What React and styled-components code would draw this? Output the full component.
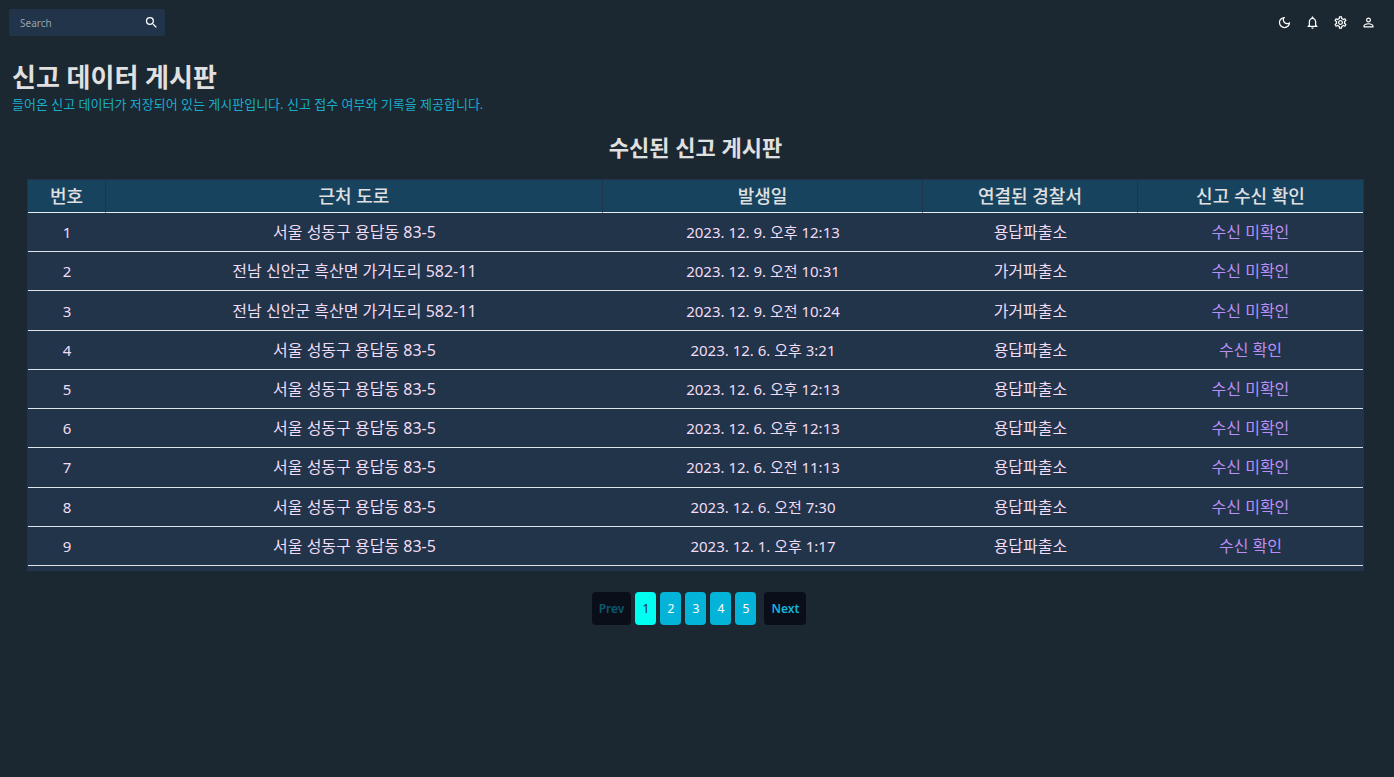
import React, { useState } from "react";
import styled, { createGlobalStyle } from "styled-components";
import {
  MdSearch,
  MdOutlineDarkMode,
  MdOutlineNotifications,
  MdOutlineSettings,
  MdPersonOutline,
} from "react-icons/md";

const GlobalStyle = createGlobalStyle`
  * { box-sizing: border-box; }
  body {
    margin: 0;
    min-height: 100vh;
    background: #1b2731;
    color: #e0e0e0;
    font-family: "Noto Sans", "Noto Sans CJK KR", sans-serif;
  }
  button, input { font-family: inherit; }
`;

const TopBar = styled.header`
  display: flex;
  justify-content: space-between;
  align-items: center;
  padding: 9px 12px 9px 9px;
`;

const SearchBox = styled.form`
  display: flex;
  align-items: center;
  width: 156px;
  height: 27px;
  padding: 0 6px 0 11px;
  background: #213449;
  border-radius: 2px;
`;

const SearchInput = styled.input`
  flex: 1;
  min-width: 0;
  padding: 0;
  border: 0;
  outline: 0;
  background: transparent;
  color: #e0e0e0;
  font-size: 10px;
  line-height: 16px;

  &::placeholder {
    color: #98a2ac;
    opacity: 1;
  }
`;

const IconButton = styled.button`
  display: flex;
  align-items: center;
  justify-content: center;
  width: ${(p) => (p.$compact ? "15px" : "28px")};
  height: 27px;
  padding: 0;
  border: 0;
  background: transparent;
  color: #ffffff;
  font-size: 15px;
  cursor: pointer;
`;

const Tools = styled.div`
  display: flex;
`;

const PageHeading = styled.div`
  padding: 14px 12px 0;
`;

const Title = styled.h1`
  margin: 0;
  font-size: 26px;
  line-height: 36px;
  font-weight: 700;
`;

const Subtitle = styled.p`
  margin: 0;
  color: #1aaccb;
  font-size: 13px;
  line-height: 18px;
`;

const Board = styled.main`
  padding: 18px 30px 0 27px;
`;

const BoardTitle = styled.h2`
  margin: 0 0 16px;
  text-align: center;
  font-size: 22px;
  line-height: 32px;
  font-weight: 700;
`;

const TablePanel = styled.div`
  padding: 1px 1px 5px;
  background: #213449;
`;

const ReportTable = styled.table`
  width: 100%;
  height: 386px;
  table-layout: fixed;
  border-collapse: separate;
  border-spacing: 0;
`;

const Column = styled.col`
  width: ${(p) => p.$width};
`;

const HeadCell = styled.th`
  height: 33px;
  padding: 0;
  background: #18435f;
  border-bottom: 1px solid #e8edf2;
  border-right: 1px solid #213449;
  font-size: 18px;
  line-height: 24px;
  font-weight: 500;

  &:last-child {
    border-right: 0;
  }
`;

const Cell = styled.td`
  height: 39px;
  padding: 0;
  border-bottom: 1px solid #e0e4ea;
  color: ${(p) => (p.$status ? "#bb8ef5" : "#f3dcf5")};
  text-align: center;
  font-size: ${(p) => (p.$numeric ? "15px" : "16px")};
  line-height: 24px;
`;

const Pagination = styled.nav`
  display: flex;
  justify-content: center;
  gap: 4px;
  padding: 21px 0 0 7px;
`;

const PageButton = styled.button`
  width: 21px;
  height: 33px;
  padding: 0;
  border: 0;
  border-radius: 4px;
  background: ${(p) => (p.$active ? "#00fff0" : "#04b4d8")};
  color: ${(p) => (p.$active ? "#1b2731" : "#ffffff")};
  font-size: 12px;
  line-height: 18px;
  cursor: pointer;
`;

const StepButton = styled.button`
  height: 33px;
  padding: 0 7px;
  border: 0;
  border-radius: 4px;
  background: #0a0e18;
  color: #17b3d9;
  font-size: 12px;
  line-height: 18px;
  font-weight: 600;
  cursor: pointer;

  &:last-child {
    margin-left: 4px;
  }

  &:disabled {
    color: #0c5b70;
    cursor: default;
  }
`;

const columns = [
  { label: "번호", width: "5.84%" },
  { label: "근처 도로", width: "37.23%" },
  { label: "발생일", width: "23.97%" },
  { label: "연결된 경찰서", width: "16.1%" },
  { label: "신고 수신 확인", width: "16.86%" },
];

const SEOUL = "서울 성동구 용답동 83-5";
const SINAN = "전남 신안군 흑산면 가거도리 582-11";

const reports = [
  [SEOUL, "2023. 12. 9. 오후 12:13", "용답파출소", false],
  [SINAN, "2023. 12. 9. 오전 10:31", "가거파출소", false],
  [SINAN, "2023. 12. 9. 오전 10:24", "가거파출소", false],
  [SEOUL, "2023. 12. 6. 오후 3:21", "용답파출소", true],
  [SEOUL, "2023. 12. 6. 오후 12:13", "용답파출소", false],
  [SEOUL, "2023. 12. 6. 오후 12:13", "용답파출소", false],
  [SEOUL, "2023. 12. 6. 오전 11:13", "용답파출소", false],
  [SEOUL, "2023. 12. 6. 오전 7:30", "용답파출소", false],
  [SEOUL, "2023. 12. 1. 오후 1:17", "용답파출소", true],
];

const tools = [
  { label: "Toggle dark mode", Icon: MdOutlineDarkMode },
  { label: "Notifications", Icon: MdOutlineNotifications },
  { label: "Settings", Icon: MdOutlineSettings },
  { label: "Account", Icon: MdPersonOutline },
];

const pages = [1, 2, 3, 4, 5];

export default function App() {
  const [page, setPage] = useState(1);

  return (
    <>
      <GlobalStyle />
      <TopBar>
        <SearchBox role="search" onSubmit={(e) => e.preventDefault()}>
          <SearchInput type="text" placeholder="Search" aria-label="Search" />
          <IconButton type="submit" aria-label="Submit search" $compact>
            <MdSearch />
          </IconButton>
        </SearchBox>
        <Tools>
          {tools.map(({ label, Icon }) => (
            <IconButton key={label} type="button" aria-label={label}>
              <Icon />
            </IconButton>
          ))}
        </Tools>
      </TopBar>

      <PageHeading>
        <Title>신고 데이터 게시판</Title>
        <Subtitle>
          들어온 신고 데이터가 저장되어 있는 게시판입니다. 신고 접수 여부와 기록을 제공합니다.
        </Subtitle>
      </PageHeading>

      <Board>
        <BoardTitle>수신된 신고 게시판</BoardTitle>
        <TablePanel>
          <ReportTable>
            <colgroup>
              {columns.map((c) => (
                <Column key={c.label} $width={c.width} />
              ))}
            </colgroup>
            <thead>
              <tr>
                {columns.map((c) => (
                  <HeadCell key={c.label} scope="col">
                    {c.label}
                  </HeadCell>
                ))}
              </tr>
            </thead>
            <tbody>
              {reports.map(([road, date, station, confirmed], i) => (
                <tr key={i}>
                  <Cell $numeric>{i + 1}</Cell>
                  <Cell>{road}</Cell>
                  <Cell $numeric>{date}</Cell>
                  <Cell>{station}</Cell>
                  <Cell $status>{confirmed ? "수신 확인" : "수신 미확인"}</Cell>
                </tr>
              ))}
            </tbody>
          </ReportTable>
        </TablePanel>
        <Pagination aria-label="Pagination">
          <StepButton type="button" disabled={page === 1} onClick={() => setPage(page - 1)}>
            Prev
          </StepButton>
          {pages.map((n) => (
            <PageButton
              key={n}
              type="button"
              $active={n === page}
              aria-current={n === page ? "page" : undefined}
              onClick={() => setPage(n)}
            >
              {n}
            </PageButton>
          ))}
          <StepButton
            type="button"
            disabled={page === pages.length}
            onClick={() => setPage(page + 1)}
          >
            Next
          </StepButton>
        </Pagination>
      </Board>
    </>
  );
}
